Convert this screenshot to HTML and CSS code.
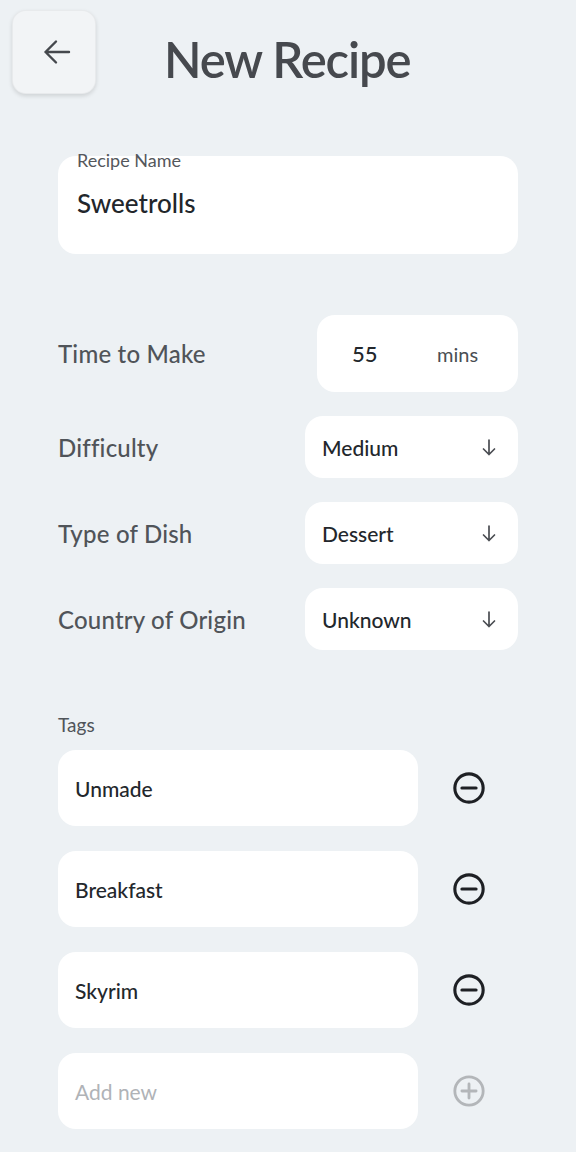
FILE: index.html
```html
<!DOCTYPE html>
<html>
<head>
<meta charset="utf-8">
<link rel="stylesheet" href="styles.css">
</head>
<body>
<header class="header">
  <button class="back">
    <svg width="30" height="28" viewBox="0 0 30 28"><path d="M27 14H3.5M14 3.5L3.5 14L14 24.5" fill="none" stroke="#45484d" stroke-width="2.4" stroke-linecap="round" stroke-linejoin="round"/></svg>
  </button>
  <h1 class="title">New Recipe</h1>
</header>
<main class="form">
  <div class="name-card">
    <span class="name-label">Recipe Name</span>
    <span class="name-value">Sweetrolls</span>
  </div>

  <div class="row row-time">
    <span class="row-label">Time to Make</span>
    <div class="time-box"><span class="time-value">55</span><span class="time-unit">mins</span></div>
  </div>

  <div class="row row-select">
    <span class="row-label">Difficulty</span>
    <div class="select"><span>Medium</span><svg class="down" width="14" height="17" viewBox="0 0 14 17"><path d="M7 1V15.5M1.5 10L7 15.5L12.5 10" fill="none" stroke="#4a4d52" stroke-width="1.7" stroke-linecap="round" stroke-linejoin="round"/></svg></div>
  </div>
  <div class="row row-select">
    <span class="row-label">Type of Dish</span>
    <div class="select"><span>Dessert</span><svg class="down" width="14" height="17" viewBox="0 0 14 17"><path d="M7 1V15.5M1.5 10L7 15.5L12.5 10" fill="none" stroke="#4a4d52" stroke-width="1.7" stroke-linecap="round" stroke-linejoin="round"/></svg></div>
  </div>
  <div class="row row-select">
    <span class="row-label">Country of Origin</span>
    <div class="select"><span>Unknown</span><svg class="down" width="14" height="17" viewBox="0 0 14 17"><path d="M7 1V15.5M1.5 10L7 15.5L12.5 10" fill="none" stroke="#4a4d52" stroke-width="1.7" stroke-linecap="round" stroke-linejoin="round"/></svg></div>
  </div>

  <div class="tags-label">Tags</div>
  <div class="tag-row">
    <div class="tag-box">Unmade</div>
    <svg class="tag-icon" width="34" height="34" viewBox="0 0 24 24"><circle cx="12" cy="12" r="10" fill="none" stroke="#1e2024" stroke-width="2.2"/><path d="M7 12H17" stroke="#1e2024" stroke-width="2.2" stroke-linecap="round"/></svg>
  </div>
  <div class="tag-row">
    <div class="tag-box">Breakfast</div>
    <svg class="tag-icon" width="34" height="34" viewBox="0 0 24 24"><circle cx="12" cy="12" r="10" fill="none" stroke="#1e2024" stroke-width="2.2"/><path d="M7 12H17" stroke="#1e2024" stroke-width="2.2" stroke-linecap="round"/></svg>
  </div>
  <div class="tag-row">
    <div class="tag-box">Skyrim</div>
    <svg class="tag-icon" width="34" height="34" viewBox="0 0 24 24"><circle cx="12" cy="12" r="10" fill="none" stroke="#1e2024" stroke-width="2.2"/><path d="M7 12H17" stroke="#1e2024" stroke-width="2.2" stroke-linecap="round"/></svg>
  </div>
  <div class="tag-row">
    <div class="tag-box placeholder">Add new</div>
    <svg class="tag-icon" width="34" height="34" viewBox="0 0 24 24"><circle cx="12" cy="12" r="10" fill="none" stroke="#b3b6b9" stroke-width="2"/><path d="M7 12H17M12 7V17" stroke="#b3b6b9" stroke-width="2" stroke-linecap="round"/></svg>
  </div>
</main>
</body>
</html>
```
FILE: styles.css
```css
* { box-sizing: border-box; }
html, body { margin: 0; padding: 0; }
body {
  background: #edf1f4;
  font-family: Lato, "Noto Sans", sans-serif;
  color: #23272c;
  width: 576px;
  min-height: 1152px;
}
.header {
  display: flex;
  align-items: flex-start;
  padding: 10px 0 0 12px;
}
.back {
  width: 84px;
  height: 84px;
  border-radius: 14px;
  background: #f2f4f6;
  border: 1px solid rgba(0,0,0,0.04);
  box-shadow: 0 2px 4px rgba(0,0,0,0.13);
  display: flex;
  align-items: center;
  justify-content: center;
  padding: 0 0 0 5px;
}
.title {
  margin: 24px 0 0 68px;
  font-size: 49px;
  line-height: 50px;
  font-weight: 600;
  letter-spacing: -1.1px;
  color: #46494e;
}
.form {
  padding: 0 58px;
  margin-top: 62px;
  display: flex;
  flex-direction: column;
}
.name-card {
  height: 98px;
  background: #fff;
  border-radius: 18px;
  padding: 0 19px;
  display: flex;
  flex-direction: column;
}
.name-label {
  margin-top: -6px;
  font-size: 18px;
  line-height: 21px;
  color: #54575c;
}
.name-value {
  margin-top: 17px;
  font-size: 26px;
  line-height: 30px;
  font-weight: 500;
  color: #22262b;
}
.row {
  display: flex;
  align-items: center;
  justify-content: space-between;
}
.row-label {
  font-size: 24px;
  font-weight: 500;
  letter-spacing: 0.2px;
  color: #505459;
}
.row-time { margin-top: 61px; }
.time-box {
  width: 201px;
  height: 77px;
  background: #fff;
  border-radius: 18px;
  display: flex;
  align-items: center;
  padding-left: 35px;
}
.time-value {
  width: 85px;
  font-size: 22px;
  font-weight: 500;
  color: #23272c;
}
.time-unit {
  font-size: 20px;
  color: #4a4e53;
}
.row-select { margin-top: 24px; }
.select {
  width: 213px;
  height: 62px;
  background: #fff;
  border-radius: 18px;
  display: flex;
  align-items: center;
  justify-content: space-between;
  padding: 0 22px 0 17px;
  font-size: 21px;
  font-weight: 500;
  color: #23272c;
}
.tags-label {
  margin-top: 64px;
  font-size: 19px;
  line-height: 22px;
  color: #505459;
}
.tag-row {
  display: flex;
  align-items: center;
  margin-top: 25px;
}
.tags-label + .tag-row { margin-top: 14px; }
.tag-box {
  width: 360px;
  height: 76px;
  background: #fff;
  border-radius: 18px;
  display: flex;
  align-items: center;
  padding-left: 17px;
  font-size: 21px;
  font-weight: 500;
  color: #23272c;
}
.tag-box.placeholder {
  font-weight: 400;
  color: #b0b3b7;
}
.tag-icon { margin-left: 34px; }
```
